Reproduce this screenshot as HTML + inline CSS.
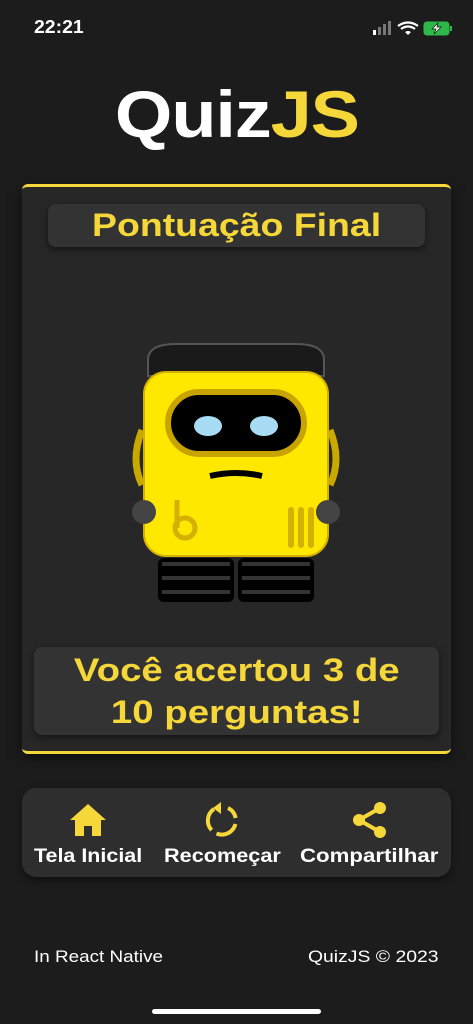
<!DOCTYPE html>
<html><head><meta charset="utf-8"><style>
*{margin:0;padding:0;box-sizing:border-box}
body{width:473px;height:1024px;background:#1c1c1c;font-family:"Liberation Sans",sans-serif;position:relative;overflow:hidden;color:#fff}
.abs{position:absolute}
.y{color:#f6d73a}
.sx{display:inline-block;transform-origin:center}
</style></head><body>
<div class="abs" style="left:34px;top:17px;font-size:18px;font-weight:bold"><span class="sx" style="transform:scaleX(1.08);transform-origin:left">22:21</span></div>
<svg class="abs" style="left:372px;top:20px" width="82" height="18" viewBox="0 0 82 18">
<rect x="1" y="10" width="3" height="5" fill="#fff"/><rect x="6" y="7" width="3" height="8" fill="#777"/><rect x="11" y="4" width="3" height="11" fill="#777"/><rect x="16" y="1" width="3" height="14" fill="#777"/>
<path d="M26 6 Q36 -1 46 6" stroke="#fff" stroke-width="2.2" fill="none"/><path d="M29 9 Q36 4 43 9" stroke="#fff" stroke-width="2.2" fill="none"/><path d="M33 12 L36 15 L39 12 Q36 10 33 12Z" fill="#fff"/>
<rect x="52" y="2" width="25" height="13" rx="3" fill="#2fb84a" stroke="#2fb84a"/><rect x="78" y="6" width="2" height="5" fill="#2fb84a"/><path d="M66 3 L60 9 H64 L62 14 L69 7 H65 Z" fill="#fff" stroke="#111" stroke-width=".7"/>
</svg>
<div class="abs" style="left:0;width:473px;top:76px;text-align:center;font-size:66px;font-weight:900;letter-spacing:-1px"><span class="sx" style="transform:scaleX(1.12)">Quiz<span class="y">JS</span></span></div>
<div class="abs" style="left:22px;top:184px;width:429px;height:570px;background:#272727;border-top:3px solid #f6d73a;border-bottom:3px solid #f6d73a;border-radius:6px;box-shadow:0 4px 14px rgba(0,0,0,.5)"></div>
<div class="abs" style="left:48px;top:204px;width:377px;height:43px;background:#333;border-radius:8px;box-shadow:0 3px 8px rgba(0,0,0,.5);text-align:center;font-size:32px;font-weight:bold;line-height:43px"><span class="y sx" style="transform:scaleX(1.17)">Pontuação Final</span></div>
<svg class="abs" style="left:128px;top:340px" width="216" height="264" viewBox="0 0 216 264">
<path d="M20 20 Q20 4 48 4 H168 Q196 4 196 20 V36 H20Z" fill="#1a1a1a" stroke="#555" stroke-width="2"/>
<path d="M14 145 Q2 120 14 90" stroke="#c9a800" stroke-width="7" fill="none"/>
<path d="M202 145 Q214 120 202 90" stroke="#c9a800" stroke-width="7" fill="none"/>
<rect x="16" y="32" width="184" height="184" rx="22" fill="#ffe800" stroke="#d4b000" stroke-width="2"/>
<rect x="40" y="52" width="136" height="62" rx="31" fill="#000" stroke="#c9a400" stroke-width="6"/>
<ellipse cx="80" cy="86" rx="14" ry="10" fill="#a8dcf4"/><ellipse cx="136" cy="86" rx="14" ry="10" fill="#a8dcf4"/>
<path d="M82 136 Q108 130 134 136" stroke="#000" stroke-width="6" fill="none"/>
<circle cx="57" cy="188" r="10" stroke="#d4b000" stroke-width="5" fill="none"/><path d="M49 160 V188" stroke="#d4b000" stroke-width="5"/>
<path d="M163 170 V205 M173 170 V205 M183 170 V205" stroke="#d4b000" stroke-width="6" stroke-linecap="round"/>
<circle cx="16" cy="172" r="12" fill="#444"/><circle cx="200" cy="172" r="12" fill="#444"/>
<rect x="30" y="218" width="76" height="44" rx="6" fill="#000"/><rect x="110" y="218" width="76" height="44" rx="6" fill="#000"/>
<path d="M34 224 H102 M34 238 H102 M34 252 H102 M114 224 H182 M114 238 H182 M114 252 H182" stroke="#333" stroke-width="4"/>
</svg>
<div class="abs" style="left:34px;top:647px;width:405px;height:88px;background:#333;border-radius:8px;box-shadow:0 3px 8px rgba(0,0,0,.5);text-align:center;font-size:32px;font-weight:bold;line-height:42px;padding-top:2px"><span class="y sx" style="transform:scaleX(1.2)">Você acertou 3 de<br>10 perguntas!</span></div>
<div class="abs" style="left:22px;top:788px;width:429px;height:89px;background:#2e2e2e;border-radius:14px;box-shadow:0 3px 8px rgba(0,0,0,.5)"></div>
<svg class="abs" style="left:68px;top:802px" width="40" height="36" viewBox="0 0 40 36"><path d="M20 2 L38 18 H33 V34 H24 V24 H16 V34 H7 V18 H2Z" fill="#f6d73a"/></svg>
<svg class="abs" style="left:202px;top:800px" width="38" height="38" viewBox="0 0 38 38"><path d="M12 9 A14 14 0 1 0 26 8" stroke="#f6d73a" stroke-width="4" fill="none" stroke-dasharray="24 6"/><path d="M19 2 V14 L11 8Z" fill="#f6d73a"/></svg>
<svg class="abs" style="left:350px;top:800px" width="40" height="40" viewBox="0 0 40 40"><path d="M30 8 L9 20 L30 32" stroke="#f6d73a" stroke-width="4" fill="none"/><circle cx="30" cy="8" r="6" fill="#f6d73a"/><circle cx="9" cy="20" r="6" fill="#f6d73a"/><circle cx="30" cy="32" r="6" fill="#f6d73a"/></svg>
<div class="abs" style="left:34px;top:846px;font-size:19px;font-weight:bold"><span class="sx" style="transform:scaleX(1.13);transform-origin:left">Tela Inicial</span></div>
<div class="abs" style="left:164px;top:846px;font-size:19px;font-weight:bold"><span class="sx" style="transform:scaleX(1.14);transform-origin:left">Recomeçar</span></div>
<div class="abs" style="left:300px;top:846px;font-size:19px;font-weight:bold"><span class="sx" style="transform:scaleX(1.17);transform-origin:left">Compartilhar</span></div>
<div class="abs" style="left:34px;top:947px;font-size:17px"><span class="sx" style="transform:scaleX(1.11);transform-origin:left">In React Native</span></div>
<div class="abs" style="right:34px;top:947px;font-size:17px"><span class="sx" style="transform:scaleX(1.14);transform-origin:right">QuizJS © 2023</span></div>
<div class="abs" style="left:152px;top:1009px;width:169px;height:5px;border-radius:3px;background:#fff"></div>
</body></html>
